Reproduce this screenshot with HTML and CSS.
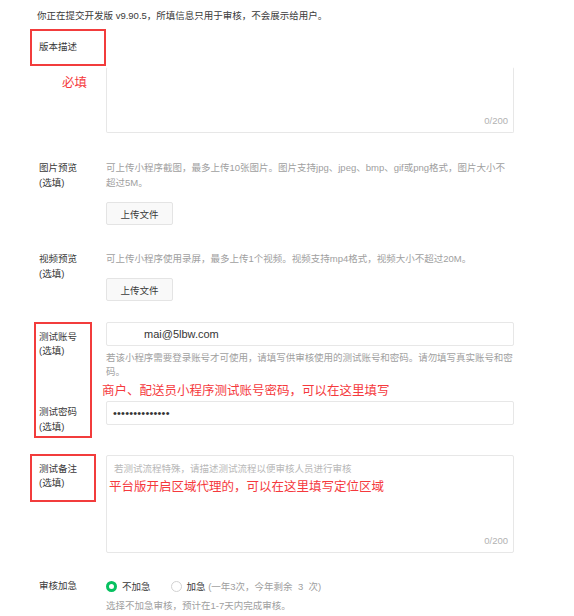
FILE: index.html
```html
<!DOCTYPE html>
<html lang="zh-CN">
  <head>
    <meta charset="UTF-8">
    <meta name="viewport" content="width=device-width, initial-scale=1.0">
    <title>提交审核</title>
    <link rel="stylesheet" href="styles.css">
  </head>
  <body>
    <div class="page">
      <p class="intro">你正在提交开发版 v9.90.5，所填信息只用于审核，不会展示给用户。</p>

      <div class="row row-desc">
        <div class="label">版本描述
          <div class="must">必填</div>
        </div>
        <div class="field">
          <div class="textarea textarea-short"><span class="count">0/200</span></div>
        </div>
      </div>

      <div class="row row-pic">
        <div class="label">图片预览<br>(选填)</div>
        <div class="field">
          <p class="help">可上传小程序截图，最多上传10张图片。图片支持jpg、jpeg、bmp、gif或png格式，图片大小不超过5M。</p>
          <button class="btn">上传文件</button>
        </div>
      </div>

      <div class="row row-video">
        <div class="label">视频预览<br>(选填)</div>
        <div class="field">
          <p class="help">可上传小程序使用录屏，最多上传1个视频。视频支持mp4格式，视频大小不超过20M。</p>
          <button class="btn">上传文件</button>
        </div>
      </div>

      <div class="row row-account">
        <div class="label">测试账号<br>(选填)</div>
        <div class="field">
          <div class="input input-account">mai@5lbw.com</div>
          <p class="help help-account">若该小程序需要登录账号才可使用，请填写供审核使用的测试账号和密码。请勿填写真实账号和密码。</p>
          <div class="note note-account">商户、配送员小程序测试账号密码，可以在这里填写</div>
        </div>
      </div>

      <div class="row row-pass">
        <div class="label">测试密码<br>(选填)</div>
        <div class="field">
          <div class="input input-pass">••••••••••••••</div>
        </div>
      </div>

      <div class="row row-remark">
        <div class="label">测试备注<br>(选填)</div>
        <div class="field">
          <div class="textarea textarea-tall">
            <div class="placeholder">若测试流程特殊，请描述测试流程以便审核人员进行审核</div>
            <div class="note note-remark">平台版开启区域代理的，可以在这里填写定位区域</div>
            <span class="count">0/200</span>
          </div>
        </div>
      </div>

      <div class="row row-urgent">
        <div class="label">审核加急</div>
        <div class="field">
          <div class="radios">
            <label class="radio"><span class="dot dot-on"></span>不加急</label>
            <label class="radio"><span class="dot"></span>加急 <span class="muted">(一年3次，今年剩余&nbsp; 3&nbsp; 次)</span></label>
          </div>
          <p class="help help-urgent">选择不加急审核，预计在1-7天内完成审核。</p>
        </div>
      </div>

      <!-- red annotation frames -->
      <span class="mark mark-desc"></span>
      <span class="mark mark-account"></span>
      <span class="mark mark-remark"></span>
    </div>
  </body>
</html>
```

FILE: styles.css
```css
body {
    margin: 0;
    padding: 0;
    background: #fff;
    font-family: "Liberation Sans", "Noto Sans CJK SC", sans-serif;
    font-size: 9.5px;
    color: #3a3a3a;
}
.page {
    position: relative;
    padding: 0 60px 0 38px;
    width: 476px;
}
p {
    margin: 0;
}
.intro {
    padding-top: 9px;
    line-height: 14px;
    margin-left: -1px;
}
.row {
    display: grid;
    grid-template-columns: 68px 408px;
}
.label {
    padding-left: 1px;
    line-height: 15px;
}
.field {
    display: flex;
    flex-direction: column;
    align-items: flex-start;
}
.help {
    color: #a0a0a0;
    line-height: 15px;
}

/* version description */
.row-desc {
    margin-top: 17px;
}
.row-desc .label {
    line-height: 14px;
}
.must {
    margin-top: 21px;
    padding-left: 23px;
    line-height: 16px;
    font-size: 12.5px;
    color: #f5393d;
}
.textarea {
    position: relative;
    box-sizing: border-box;
    width: 408px;
    border: 1px solid #e7e7e7;
    border-radius: 2px;
}
.textarea-short {
    margin-top: 27px;
    height: 66px;
    border-top-color: transparent;
}
.count {
    position: absolute;
    right: 5px;
    bottom: 4px;
    line-height: 14px;
    color: #b2b2b2;
}

/* uploads */
.row-pic {
    margin-top: 26.5px;
}
.row-video {
    margin-top: 25.5px;
}
.btn {
    margin-top: 12.5px;
    width: 67px;
    height: 23px;
    padding: 0;
    border: 1px solid #e4e4e4;
    border-radius: 2px;
    background: #f9f9f9;
    font-family: inherit;
    font-size: 9.5px;
    color: #3a3a3a;
}

/* test account */
.row-account {
    margin-top: 21px;
}
.row-account .label,
.row-pass .label,
.row-remark .label {
    line-height: 14.5px;
}
.row-account .label {
    padding-top: 7.5px;
}
.input {
    box-sizing: border-box;
    width: 408px;
    height: 24px;
    border: 1px solid #e7e7e7;
    border-radius: 2px;
    display: flex;
    align-items: center;
}
.input-account {
    padding-left: 37px;
    font-size: 11px;
    color: #353535;
}
.input-pass {
    padding-left: 6px;
    font-size: 11px;
    letter-spacing: 0.2px;
    color: #353535;
}
.help-account {
    margin-top: 5px;
    line-height: 14px;
    letter-spacing: -0.04px;
}
.note {
    font-size: 12.5px;
    line-height: 16px;
    color: #f5393d;
    white-space: nowrap;
}
.note-account {
    margin-top: 4px;
    margin-left: -4px;
}
.row-pass {
    margin-top: 2px;
    height: 33px;
}
.row-pass .label {
    padding-top: 4px;
}

/* remarks */
.row-remark {
    margin-top: 21px;
}
.row-remark .label {
    padding-top: 6.5px;
}
.textarea-tall {
    height: 98px;
    padding: 6px 7px;
}
.placeholder {
    line-height: 14px;
    color: #b8b8b8;
}
.note-remark {
    margin-top: 3px;
    margin-left: -5px;
}

/* urgent review */
.row-urgent {
    margin-top: 26px;
}
.row-urgent .label {
    line-height: 14px;
}
.radios {
    display: flex;
    align-items: center;
    height: 16px;
    margin-top: -1px;
}
.radio {
    display: flex;
    align-items: center;
    margin-right: 20px;
    white-space: pre;
}
.dot {
    box-sizing: border-box;
    width: 11px;
    height: 11px;
    margin-right: 5px;
    border: 1px solid #d2d2d2;
    border-radius: 50%;
    background: #fff;
}
.dot-on {
    border: 3px solid #07c160;
}
.muted {
    color: #a0a0a0;
}
.help-urgent {
    margin-top: 5px;
    line-height: 14px;
}

/* annotation frames over the form */
.mark {
    position: absolute;
    box-sizing: border-box;
    border: 2px solid #f23c3c;
}
.mark-desc {
    left: 30px;
    top: 29px;
    width: 76px;
    height: 37px;
}
.mark-account {
    left: 34px;
    top: 322px;
    width: 58px;
    height: 116px;
}
.mark-remark {
    left: 30px;
    top: 454px;
    width: 66px;
    height: 48px;
}
```
